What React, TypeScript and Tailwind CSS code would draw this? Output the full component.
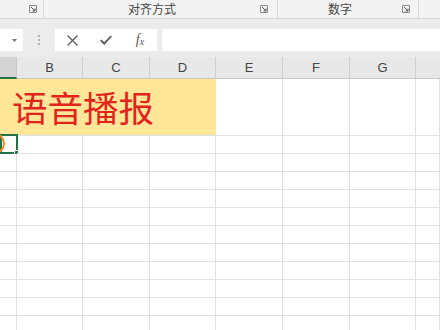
import React from 'react'

const cols = [
  { key: 'A', w: 'w-[17px]' },
  { key: 'B', w: 'w-[66px]' },
  { key: 'C', w: 'w-[67px]' },
  { key: 'D', w: 'w-[66px]' },
  { key: 'E', w: 'w-[67px]' },
  { key: 'F', w: 'w-[67px]' },
  { key: 'G', w: 'w-[66px]' },
  { key: 'H', w: 'flex-1' },
]

function Launcher() {
  return (
    <svg width="8" height="8" viewBox="0 0 8 8" className="shrink-0">
      <path d="M0.5 0.5h7v7h-7z" fill="none" stroke="#8a8a8a" strokeWidth="1" />
      <path d="M2 2l4 4M6 3.5V6H3.5" fill="none" stroke="#555" strokeWidth="1" />
    </svg>
  )
}

function RibbonLabels() {
  return (
    <div className="flex shrink-0 h-[19px] bg-[#f3f3f3] border-b border-[#d6d6d6] text-[12px] text-[#444]">
      <div className="w-[44px] flex items-center justify-end pr-[6px] border-r border-[#d8d8d8]">
        <Launcher />
      </div>
      <div className="w-[234px] flex items-center pr-[9px] border-r border-[#d8d8d8]">
        <span className="flex-1 text-center">对齐方式</span>
        <Launcher />
      </div>
      <div className="w-[141px] flex items-center pr-[8px] border-r border-[#d8d8d8]">
        <span className="flex-1 text-center">数字</span>
        <Launcher />
      </div>
      <div className="flex-1" />
    </div>
  )
}

function FormulaBar() {
  return (
    <div className="flex shrink-0 items-start h-[38px] bg-[#ececec] pt-[10px]">
      <div className="w-[23px] h-[22px] bg-white flex items-center justify-end pr-[6px]">
        <svg width="5" height="3" viewBox="0 0 5 3">
          <path d="M0 0h5L2.5 3z" fill="#777" />
        </svg>
      </div>
      <div className="w-[32px] h-[22px] flex flex-col items-center justify-center gap-[2px]">
        <span className="w-[2px] h-[2px] bg-[#b0b0b0]" />
        <span className="w-[2px] h-[2px] bg-[#b0b0b0]" />
        <span className="w-[2px] h-[2px] bg-[#b0b0b0]" />
      </div>
      <div className="w-[102px] h-[22px] bg-white flex items-center">
        <div className="w-[34px] flex justify-center">
          <svg width="11" height="11" viewBox="0 0 11 11">
            <path d="M0.5 0.5l10 10M10.5 0.5l-10 10" stroke="#555" strokeWidth="1.2" />
          </svg>
        </div>
        <div className="w-[34px] flex justify-center">
          <svg width="12" height="10" viewBox="0 0 12 10">
            <path d="M0.8 5.2l3.4 3.4L11.2 1" fill="none" stroke="#555" strokeWidth="1.8" />
          </svg>
        </div>
        <div className="w-[34px] flex justify-center text-[#555] italic font-['Liberation_Serif',serif] text-[14px] leading-none">
          f<span className="text-[10px] mt-[4px]">x</span>
        </div>
      </div>
      <div className="w-[5px]" />
      <div className="flex-1 h-[22px] bg-white" />
    </div>
  )
}

function HeaderRow() {
  return (
    <div className="flex shrink-0 h-[22px] bg-[#e8e8e8] text-[13px] text-[#444] font-['Liberation_Sans',sans-serif]">
      {cols.map((c) =>
        c.key === 'A' ? (
          <div key={c.key} className={`${c.w} bg-[#d4d4d4] border-b-2 border-[#217346] border-r border-r-[#c8c8c8]`} />
        ) : (
          <div
            key={c.key}
            className={`${c.w} flex items-end justify-center pb-[1px] border-b border-[#c6c6c6] ${c.key === 'H' ? '' : 'border-r border-r-[#d0d0d0]'}`}
          >
            {c.key === 'H' ? '' : c.key}
          </div>
        )
      )}
    </div>
  )
}

function TitleRow() {
  return (
    <div className="flex shrink-0 h-[57px]">
      <div className="w-[216px] bg-[#ffe699] border-b border-[#e0e0e0] flex items-center pl-[12px]">
        <span className="text-[35.5px] leading-none text-[#e3241b] font-['Noto_Sans_CJK_SC',sans-serif]">
          语音播报
        </span>
      </div>
      {cols.slice(4).map((c) => (
        <div key={c.key} className={`${c.w} border-b border-r border-[#e0e0e0]`} />
      ))}
    </div>
  )
}

function GridRow({ first }: { first?: boolean }) {
  return (
    <div className="flex h-[18px] shrink-0">
      {cols.map((c) => (
        <div key={c.key} className={`${c.w} border-b border-r border-[#e0e0e0] relative`}>
          {first && c.key === 'A' && (
            <>
              <div className="absolute left-0 top-[-2px] w-[18px] h-[20px] border-2 border-[#217346]" />
              <div className="absolute left-[14px] top-[14px] w-[5px] h-[5px] bg-[#217346] border border-white" />
            </>
          )}
        </div>
      ))}
    </div>
  )
}

export default function App() {
  return (
    <div className="w-[440px] h-[330px] overflow-hidden bg-white flex flex-col font-['Noto_Sans_CJK_SC',sans-serif] relative">
      <RibbonLabels />
      <FormulaBar />
      <HeaderRow />
      <TitleRow />
      {Array.from({ length: 11 }).map((_, i) => (
        <GridRow key={i} first={i === 0} />
      ))}
      <div className="absolute left-[-16px] top-[133px] w-[21px] h-[21px] rounded-full border-2 border-[#ef8a2c]" />
    </div>
  )
}
